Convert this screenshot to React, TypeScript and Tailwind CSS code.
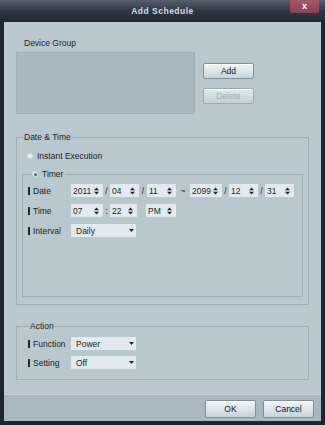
import React from "react";

function Spin() {
  return (
    <svg width="5" height="8" viewBox="0 0 5 8" className="shrink-0">
      <path d="M0 3.3L2.5 0.5L5 3.3Z M0 4.7L2.5 7.5L5 4.7Z" fill="#1f2427" />
    </svg>
  );
}

function SpinBox({ value, className }: { value: string; className: string }) {
  return (
    <div className={`flex h-[13px] items-center justify-between bg-[#e2eaef] pl-[2px] pr-[4px] ${className}`}>
      <span>{value}</span>
      <Spin />
    </div>
  );
}

function Sep({ text, className }: { text: string; className: string }) {
  return <span className={`flex justify-center ${className}`}>{text}</span>;
}

function Select({ value }: { value: string }) {
  return (
    <div className="flex h-[13px] w-[65px] items-center justify-between bg-[#e2eaef] pl-[5px] pr-[2px]">
      <span>{value}</span>
      <svg width="5" height="3" viewBox="0 0 5 3">
        <path d="M0 0H5L2.5 3Z" fill="#1f2427" />
      </svg>
    </div>
  );
}

function Label({ text }: { text: string }) {
  return (
    <div className="flex w-[43px] shrink-0 items-center gap-[3px]">
      <span className="h-[8px] w-[2px] bg-[#22272b]" />
      <span>{text}</span>
    </div>
  );
}

function Radio({ checked }: { checked?: boolean }) {
  return (
    <span className="flex h-[6px] w-[6px] items-center justify-center rounded-full border border-[#cfd9de] bg-[#eef3f5]">
      {checked && <span className="h-[3px] w-[3px] rounded-full bg-[#4b6a45]" />}
    </span>
  );
}

const btn =
  "flex h-[16px] w-[51px] items-center justify-center rounded-[2px] border shadow-[inset_0_1px_0_#ffffff]";

export default function App() {
  return (
    <div className="flex h-[425px] w-[325px] flex-col bg-[#1d2530] font-['Liberation_Sans',Arial,sans-serif] text-[8.5px] leading-[10px] text-[#1b1f22]">
      {/* title bar */}
      <div className="relative flex h-[22px] shrink-0 items-center justify-center bg-gradient-to-b from-[#57616d] via-[#2e3845] to-[#1f2733]">
        <span className="text-[8.5px] font-bold tracking-[0.5px] text-[#d5dce2]">Add Schedule</span>
        <div className="absolute right-[6px] top-0 flex h-[13px] w-[29px] items-center justify-center bg-gradient-to-b from-[#a5576a] to-[#8a4253] text-[9px] font-bold leading-none text-white">
          x
        </div>
      </div>

      {/* body */}
      <div className="mx-[4px] mb-[4px] flex flex-1 flex-col bg-[#b9c7cf]">
        <div className="flex-1 px-[12px] pt-[16px]">
          <div className="pl-[8px] leading-[11px]">Device Group</div>
          <div className="mt-[3px] flex">
            <div className="h-[62px] w-[179px] border border-[#a0afb7] bg-[#a9b8c0]" />
            <div className="ml-[8px] flex flex-col gap-[9px] pt-[11px]">
              <div className={`${btn} border-[#7f8f98] bg-gradient-to-b from-[#f1f5f7] via-[#dde6ea] to-[#c6d3d9] text-[#111]`}>
                Add
              </div>
              <div className={`${btn} border-[#9aaab2] bg-gradient-to-b from-[#dfe8ec] to-[#c5d2d8] text-[#a3b2b9]`}>
                Delete
              </div>
            </div>
          </div>

          {/* Date & Time */}
          <fieldset className="mt-[18px] border border-[#9eaeb7] px-[5px] pb-[7px] pt-[9px]">
            <legend className="ml-[1px] px-[1px]">Date &amp; Time</legend>
            <div className="flex items-center gap-[4px] pl-[5px]">
              <Radio />
              <span>Instant Execution</span>
            </div>
            <fieldset className="mt-[8px] border border-[#9eaeb7] pb-[59px] pl-[5px] pt-[5px]">
              <legend className="ml-[4px] flex items-center gap-[4px] pr-[2px]">
                <Radio checked />
                <span>Timer</span>
              </legend>
              <div className="flex flex-col gap-[7px]">
                <div className="flex h-[13px] items-center">
                  <Label text="Date" />
                  <SpinBox value="2011" className="w-[32px]" />
                  <Sep text="/" className="w-[7px]" />
                  <SpinBox value="04" className="w-[29px]" />
                  <Sep text="/" className="w-[8px]" />
                  <SpinBox value="11" className="w-[29px]" />
                  <Sep text="~" className="w-[14px]" />
                  <SpinBox value="2099" className="w-[32px]" />
                  <Sep text="/" className="w-[7px]" />
                  <SpinBox value="12" className="w-[29px]" />
                  <Sep text="/" className="w-[7px]" />
                  <SpinBox value="31" className="w-[29px]" />
                </div>
                <div className="flex h-[13px] items-center">
                  <Label text="Time" />
                  <SpinBox value="07" className="w-[32px]" />
                  <Sep text=":" className="w-[7px]" />
                  <SpinBox value="22" className="w-[27px]" />
                  <span className="w-[9px]" />
                  <SpinBox value="PM" className="w-[30px]" />
                </div>
                <div className="flex h-[13px] items-center">
                  <Label text="Interval" />
                  <Select value="Daily" />
                </div>
              </div>
            </fieldset>
          </fieldset>

          {/* Action */}
          <fieldset className="mt-[16px] border border-[#9eaeb7] pb-[10px] pl-[11px] pt-[6px]">
            <legend className="ml-[1px] px-[1px]">Action</legend>
            <div className="flex flex-col gap-[6px]">
              <div className="flex h-[13px] items-center">
                <Label text="Function" />
                <Select value="Power" />
              </div>
              <div className="flex h-[13px] items-center">
                <Label text="Setting" />
                <Select value="Off" />
              </div>
            </div>
          </fieldset>
        </div>

        {/* footer */}
        <div className="flex h-[27px] shrink-0 items-start justify-end gap-[7px] border-t border-[#c8d3d9] bg-[#a9b8c1] pr-[7px] pt-[5px]">
          <div className={`${btn} h-[18px] border-[#7f8f98] bg-gradient-to-b from-[#f1f5f7] via-[#dde6ea] to-[#c6d3d9] text-[#111]`}>
            OK
          </div>
          <div className={`${btn} h-[18px] border-[#7f8f98] bg-gradient-to-b from-[#f1f5f7] via-[#dde6ea] to-[#c6d3d9] text-[#111]`}>
            Cancel
          </div>
        </div>
      </div>
    </div>
  );
}
